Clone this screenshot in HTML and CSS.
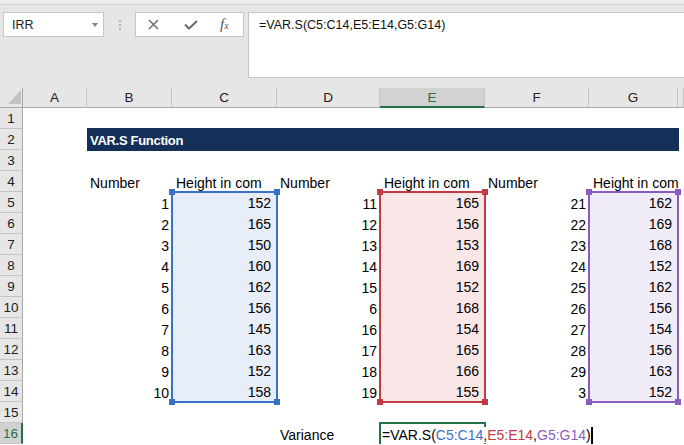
FILE: index.html
```html
<!DOCTYPE html>
<html>
<head>
<meta charset="utf-8">
<link rel="stylesheet" href="styles.css">
</head>
<body>
<div class="top">
  <div class="strip"></div>
  <div class="bar">
    <div class="namebox"><span>IRR</span><span class="arrow"></span></div>
    <div class="dots"><span></span><span></span><span></span></div>
    <div class="fxbox">
      <svg class="ic-x" width="11" height="11" viewBox="0 0 11 11"><path d="M1 1L10 10M10 1L1 10" stroke="#6e6e6e" stroke-width="1.5" fill="none"/></svg>
      <svg class="ic-ok" width="14" height="10" viewBox="0 0 14 10"><path d="M1 4.5L5 8.5L13 1" stroke="#6a6a6a" stroke-width="2" fill="none"/></svg>
      <span class="fx"><i>f</i><i class="fx-x">x</i></span>
    </div>
    <div class="formula">=VAR.S(C5:C14,E5:E14,G5:G14)</div>
  </div>
</div>
<div class="sheet">
  <div class="ch corner"><svg width="22" height="19" viewBox="0 0 22 19"><polygon points="21,2 21,16 8,16" fill="#c2c2c2"/></svg></div>
  <div class="ch">A</div><div class="ch">B</div><div class="ch">C</div><div class="ch">D</div><div class="ch sel">E</div><div class="ch">F</div><div class="ch">G</div><div class="ch"></div>

  <div class="title">VAR.S Function</div>
  <div class="range blue rc">
    <span class="h tl"></span><span class="h tr"></span><span class="h bl"></span><span class="h br"></span>
    <div class="v">152</div><div class="v">165</div><div class="v">150</div><div class="v">160</div><div class="v">162</div><div class="v">156</div><div class="v">145</div><div class="v">163</div><div class="v">152</div><div class="v">158</div>
  </div>
  <div class="range red re">
    <span class="h tl"></span><span class="h tr"></span><span class="h bl"></span><span class="h br"></span>
    <div class="v">165</div><div class="v">156</div><div class="v">153</div><div class="v">169</div><div class="v">152</div><div class="v">168</div><div class="v">154</div><div class="v">165</div><div class="v">166</div><div class="v">155</div>
  </div>
  <div class="range purple rg">
    <span class="h tl"></span><span class="h tr"></span><span class="h bl"></span><span class="h br"></span>
    <div class="v">162</div><div class="v">169</div><div class="v">168</div><div class="v">152</div><div class="v">162</div><div class="v">156</div><div class="v">154</div><div class="v">156</div><div class="v">163</div><div class="v">152</div>
  </div>
  <div class="active"><span class="txt">=VAR.S(<span class="fb">C5:C14</span>,<span class="fr">E5:E14</span>,<span class="fp">G5:G14</span>)</span><span class="caret"></span></div>

  <div class="rh">1</div><div class="c"></div><div class="c"></div><div class="c"></div><div class="c"></div><div class="c"></div><div class="c"></div><div class="c"></div><div class="c"></div>
  <div class="rh">2</div><div class="c"></div><div class="c"></div>
  <div class="rh">3</div><div class="c"></div><div class="c"></div><div class="c"></div><div class="c"></div><div class="c"></div><div class="c"></div><div class="c"></div><div class="c"></div>
  <div class="rh">4</div><div class="c"></div><div class="c">Number</div><div class="c hd">Height in com</div><div class="c">Number</div><div class="c hd">Height in com</div><div class="c">Number</div><div class="c hd">Height in com</div><div class="c"></div>

  <div class="rh">5</div><div class="c"></div><div class="c n">1</div><div class="c n">11</div><div class="c n">21</div><div class="c"></div>
  <div class="rh">6</div><div class="c"></div><div class="c n">2</div><div class="c n">12</div><div class="c n">22</div><div class="c"></div>
  <div class="rh">7</div><div class="c"></div><div class="c n">3</div><div class="c n">13</div><div class="c n">23</div><div class="c"></div>
  <div class="rh">8</div><div class="c"></div><div class="c n">4</div><div class="c n">14</div><div class="c n">24</div><div class="c"></div>
  <div class="rh">9</div><div class="c"></div><div class="c n">5</div><div class="c n">15</div><div class="c n">25</div><div class="c"></div>
  <div class="rh">10</div><div class="c"></div><div class="c n">6</div><div class="c n">6</div><div class="c n">26</div><div class="c"></div>
  <div class="rh">11</div><div class="c"></div><div class="c n">7</div><div class="c n">16</div><div class="c n">27</div><div class="c"></div>
  <div class="rh">12</div><div class="c"></div><div class="c n">8</div><div class="c n">17</div><div class="c n">28</div><div class="c"></div>
  <div class="rh">13</div><div class="c"></div><div class="c n">9</div><div class="c n">18</div><div class="c n">29</div><div class="c"></div>
  <div class="rh">14</div><div class="c"></div><div class="c n">10</div><div class="c n">19</div><div class="c n">3</div><div class="c"></div>

  <div class="rh">15</div><div class="c"></div><div class="c"></div><div class="c"></div><div class="c"></div><div class="c"></div><div class="c"></div><div class="c"></div><div class="c"></div>
  <div class="rh sel">16</div><div class="c"></div><div class="c"></div><div class="c"></div><div class="c">Variance</div><div class="c"></div><div class="c"></div><div class="c"></div>
</div>
</body>
</html>
```
FILE: styles.css
```css
html, body {
  margin: 0;
  padding: 0;
}
body {
  width: 684px;
  height: 445px;
  overflow: hidden;
  background: #fff;
  font-family: "Liberation Sans", Arial, sans-serif;
  color: #000;
}

/* ---------- formula bar area ---------- */
.top {
  height: 88px;
  background: #e6e6e6;
}
.strip {
  height: 4px;
  background: #ededed;
  border-bottom: 1px solid #d5d5d5;
}
.bar {
  display: flex;
  align-items: flex-start;
  margin-top: 7px;
  padding-left: 3px;
}
.namebox {
  width: 101px;
  height: 25px;
  box-sizing: border-box;
  background: #fff;
  border: 1px solid #c6c6c6;
  display: flex;
  align-items: center;
  justify-content: space-between;
  padding: 0 5px 0 8px;
  font-size: 12.5px;
  color: #222;
}
.arrow {
  width: 0;
  height: 0;
  border-left: 3.5px solid transparent;
  border-right: 3.5px solid transparent;
  border-top: 4px solid #808080;
}
.dots {
  margin-left: 14px;
  width: 3px;
  height: 25px;
  display: flex;
  flex-direction: column;
  justify-content: center;
  align-items: center;
  gap: 2px;
}
.dots span {
  width: 2px;
  height: 2px;
  background: #b0b0b0;
}
.fxbox {
  margin-left: 14px;
  width: 109px;
  height: 25px;
  box-sizing: border-box;
  background: #fff;
  border: 1px solid #c6c6c6;
  display: flex;
  align-items: center;
  padding-left: 12px;
}
.ic-ok {
  margin-left: 25px;
}
.fx {
  margin-left: 22px;
  font-family: "Liberation Serif", serif;
  color: #555;
  font-size: 15px;
  line-height: 15px;
}
.fx-x {
  font-size: 10px;
}
.formula {
  margin-left: 4px;
  flex: 1;
  height: 66px;
  box-sizing: border-box;
  background: #fff;
  border: 1px solid #c6c6c6;
  border-right: none;
  padding: 4px 10px;
  font-size: 12.5px;
  line-height: 16px;
  color: #111;
}

/* ---------- sheet ---------- */
.sheet {
  display: grid;
  grid-template-columns: 23px 64px 85px 105px 103px 105px 104px 89px 6px;
  grid-template-rows: 20px repeat(16, 21px);
  font-size: 14px;
}
.ch {
  background: #e6e6e6;
  border-right: 1px solid #c4c4c4;
  border-bottom: 1px solid #a8a8a8;
  box-sizing: border-box;
  text-align: center;
  font-size: 13.5px;
  line-height: 18px;
  padding-top: 1px;
  color: #222;
}
.ch.corner {
  padding: 0;
  border-right-color: #a8a8a8;
}
.ch.corner svg {
  display: block;
}
.ch.sel {
  background: #d2d2d2;
  border-bottom: 2px solid #217346;
  color: #217346;
}
.rh {
  background: #e6e6e6;
  border-right: 1px solid #a8a8a8;
  border-bottom: 1px solid #c4c4c4;
  box-sizing: border-box;
  text-align: center;
  font-size: 13.5px;
  line-height: 20px;
  padding-top: 1px;
  color: #222;
}
.rh.sel {
  background: #d2d2d2;
  border-right: 2px solid #217346;
  color: #217346;
}
.c {
  box-sizing: border-box;
  padding: 2px 3px 0;
  line-height: 21px;
  white-space: nowrap;
  min-width: 0;
}
.c.n {
  text-align: right;
}
.c.hd {
  padding-left: 4px;
}

.title {
  grid-column: 3 / 9;
  grid-row: 3;
  margin: -1px -1px -1px 0;
  background: #142f58;
  color: #fff;
  font-weight: bold;
  font-size: 13px;
  line-height: 23px;
  padding: 1px 0 0 3px;
  letter-spacing: -0.3px;
  white-space: nowrap;
}

.range {
  margin: -1px;
  border: 2px solid currentColor;
  position: relative;
  display: grid;
  grid-template-rows: repeat(10, 21px);
  align-content: start;
  z-index: 1;
}
.rc { grid-column: 4; grid-row: 6 / 16; }
.re { grid-column: 6; grid-row: 6 / 16; }
.rg { grid-column: 8; grid-row: 6 / 16; }
.blue { color: #3c70c8; background: #e8eef8; }
.red { color: #c23b44; background: #f9e7e8; }
.purple { color: #8b5cc0; background: #f0ecf8; }
.range .v {
  color: #000;
  text-align: right;
  padding-right: 5px;
  line-height: 21px;
}
.h {
  position: absolute;
  width: 6px;
  height: 6px;
  background: currentColor;
}
.h.tl { left: -4px; top: -4px; }
.h.tr { right: -4px; top: -4px; }
.h.bl { left: -4px; bottom: -4px; }
.h.br { right: -4px; bottom: -4px; }

.active {
  grid-column: 6;
  grid-row: 17;
  margin: -1px -1px 0 -1px;
  border: 2px solid #217346;
  border-bottom: none;
  line-height: 19px;
  padding: 2px 0 0 1px;
  white-space: nowrap;
  z-index: 2;
}
.active .txt {
  background: #fff;
}
.fb { color: #3c70c8; }
.fr { color: #c23b44; }
.fp { color: #8b5cc0; }
.caret {
  display: inline-block;
  width: 2px;
  height: 17px;
  background: #000;
  vertical-align: -4px;
}
```
